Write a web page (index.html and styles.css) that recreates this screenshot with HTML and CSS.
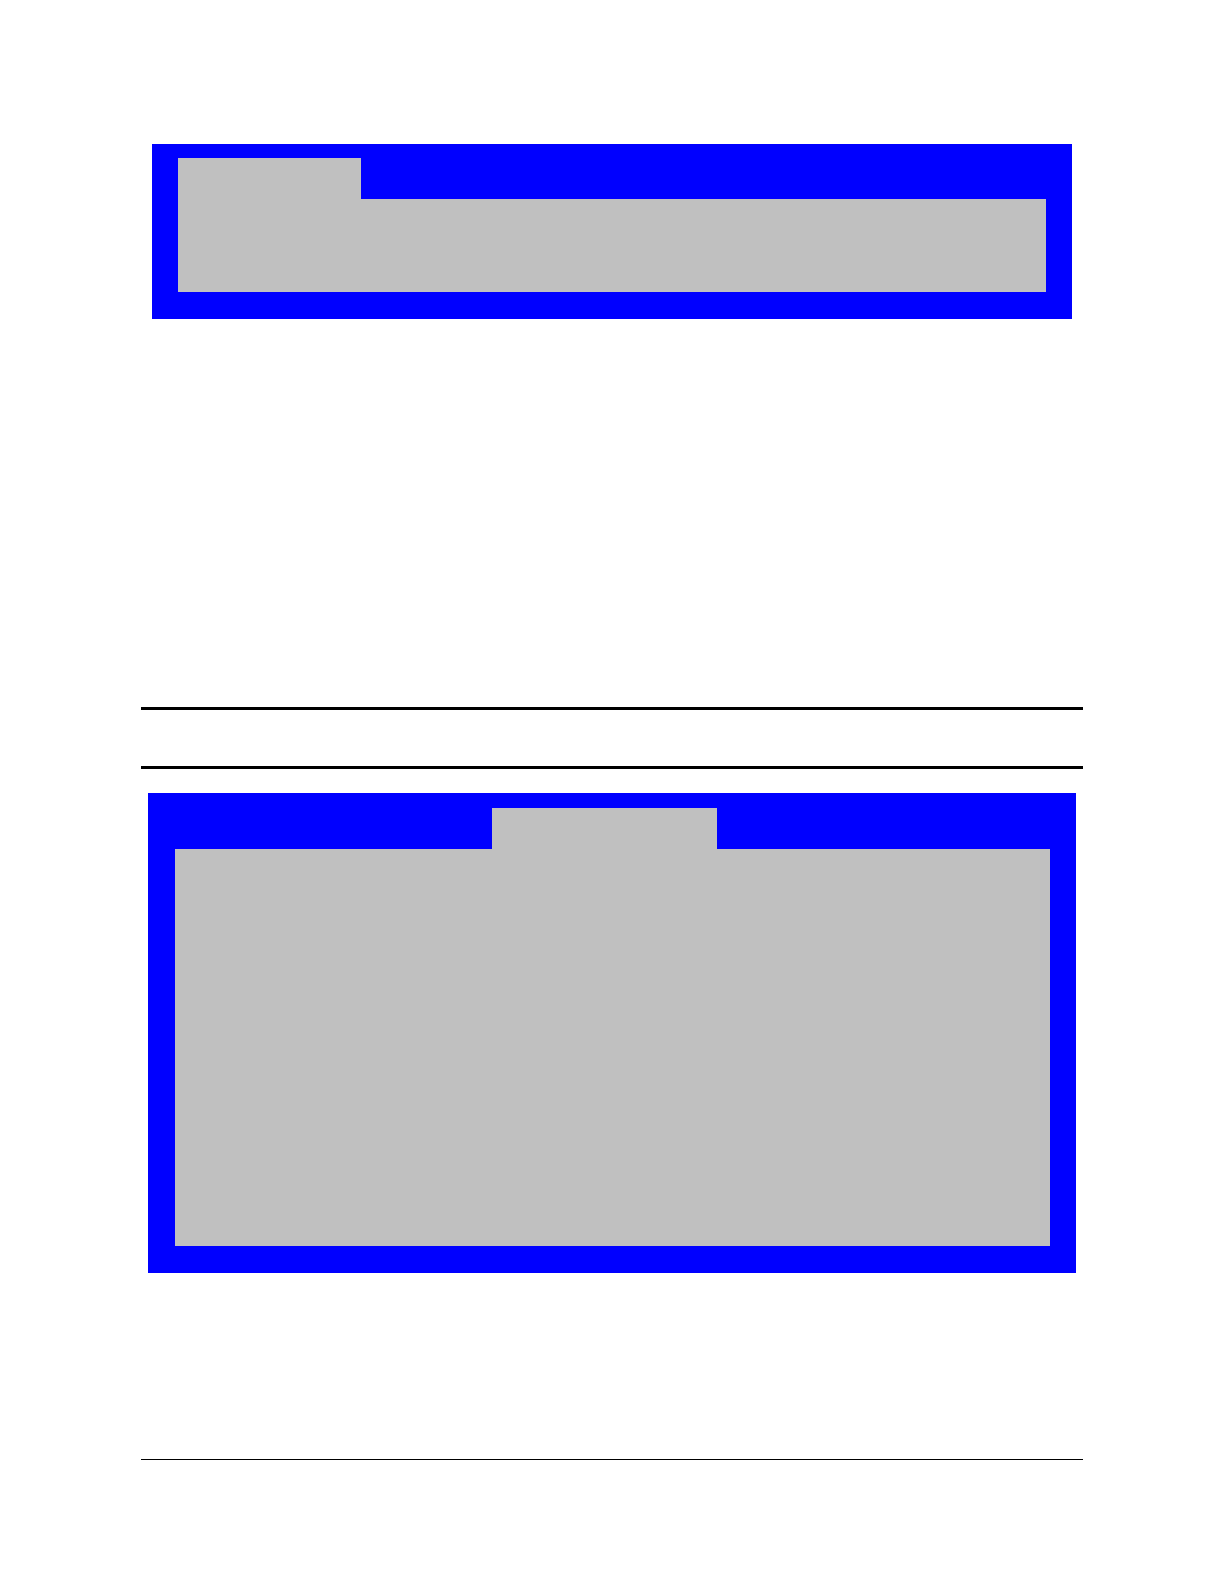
FILE: index.html
```html
<!DOCTYPE html>
<html lang="en">
<head>
<meta charset="utf-8">
<meta name="viewport" content="width=device-width, initial-scale=1">
<title>Document</title>
<link rel="stylesheet" href="styles.css">
</head>
<body>
<main class="page">
  <section class="panel panel-short">
    <div class="tabs tabs-first"><div class="tab"></div></div>
    <div class="content"></div>
  </section>
  <header class="band"></header>
  <section class="panel panel-tall">
    <div class="tabs tabs-middle"><div class="tab"></div></div>
    <div class="content"></div>
  </section>
  <footer class="footer"></footer>
</main>
</body>
</html>
```

FILE: styles.css
```css
body {
  margin: 0;
  background: #fff;
  color: #000;
  font-family: "Liberation Sans", Arial, sans-serif;
}

.page {
  display: flex;
  flex-direction: column;
  box-sizing: border-box;
  min-height: 100vh;
  padding: 144px 141px 0;
}

.panel {
  background: #00f;
}

.panel-short {
  margin: 0 11px;
  padding: 14px 26px 27px;
}

.panel-tall {
  margin: 24px 7px 0;
  padding: 15px 26px 27px 27px;
}

.tabs {
  display: grid;
}

.tabs-first {
  grid-template-columns: 183fr 685fr;
}

.tabs-middle {
  grid-template-columns: 317fr 225fr 333fr;
}

.tab {
  min-height: 41px;
  background: #c0c0c0;
}

.tabs-middle .tab {
  grid-column: 2;
}

.content {
  background: #c0c0c0;
}

.panel-short .content {
  min-height: 93px;
}

.panel-tall .content {
  min-height: 397px;
}

/* Section heading area, ruled above and below */
.band {
  margin-top: 388px;
  min-height: 56px;
  border-top: 3px solid #000;
  border-bottom: 3px solid #000;
}

.footer {
  margin-top: 186px;
  border-top: 1px solid #000;
}
```
